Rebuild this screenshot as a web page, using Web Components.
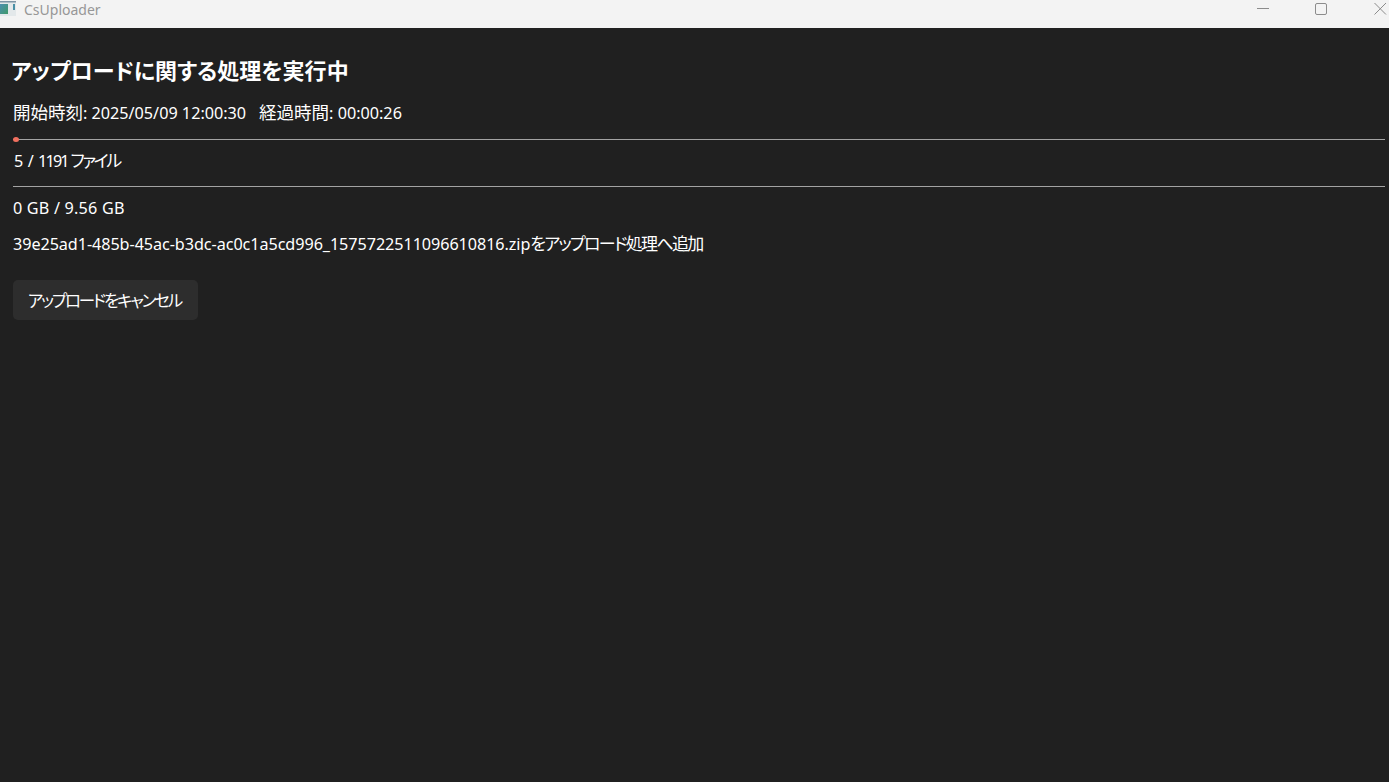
<!DOCTYPE html>
<html lang="ja">
<head>
<meta charset="utf-8">
<title>CsUploader</title>
<style>
  html, body { margin: 0; height: 100%; background: #202020; overflow: hidden; }
  body { font-family: "Noto Sans", "Noto Sans CJK JP", sans-serif; color: #fff; }
</style>
</head>
<body>
<app-window>
  <title-bar slot="bar">CsUploader</title-bar>
  <upload-status></upload-status>
</app-window>

<script>
const appWindowTemplate = document.createElement('template');
appWindowTemplate.innerHTML = `
  <style>
    :host { display: flex; flex-direction: column; height: 782px; width: 1389px; background: #202020; }
    .body { flex: 1; }
  </style>
  <slot name="bar"></slot>
  <div class="body"><slot></slot></div>
`;
class AppWindow extends HTMLElement {
  constructor() {
    super();
    this.attachShadow({ mode: 'open' });
    this.shadowRoot.appendChild(appWindowTemplate.content.cloneNode(true));
  }
}
customElements.define('app-window', AppWindow);

const titleBarTemplate = document.createElement('template');
titleBarTemplate.innerHTML = `
  <style>
    :host { display: flex; align-items: flex-start; height: 28px; background: #f3f3f3; color: #979797; font-size: 14px; }
    .icon { width: 16px; height: 18px; flex: none; margin-right: 8px; display: block; }
    .name { line-height: 19px; }
    .buttons { display: block; margin-left: auto; }
  </style>
  <svg class="icon" viewBox="0 0 16 18">
    <defs>
      <linearGradient id="g" x1="0" y1="0" x2="1" y2="1">
        <stop offset="0" stop-color="#4d8fb0"/><stop offset="1" stop-color="#3f9a6a"/>
      </linearGradient>
    </defs>
    <rect x="0" y="1" width="16" height="15" fill="#e3e8ea"/>
    <rect x="0" y="1" width="16" height="1.5" fill="#7f95a6"/>
    <rect x="0" y="4" width="8" height="10" fill="url(#g)"/>
    <rect x="13" y="4" width="2" height="6" fill="#4a8fa6"/>
  </svg>
  <span class="name"><slot></slot></span>
  <svg class="buttons" width="149" height="28" viewBox="0 0 149 28" fill="none" stroke="#8c8c8c" stroke-width="1">
    <path d="M17 8.5H29"/>
    <rect x="75.5" y="3.5" width="11" height="11" rx="1.5"/>
    <path d="M134.5 3L146 14.5M146 3L134.5 14.5"/>
  </svg>
`;
class TitleBar extends HTMLElement {
  constructor() {
    super();
    this.attachShadow({ mode: 'open' });
    this.shadowRoot.appendChild(titleBarTemplate.content.cloneNode(true));
  }
}
customElements.define('title-bar', TitleBar);

const progressLineTemplate = document.createElement('template');
progressLineTemplate.innerHTML = `
  <style>
    :host { display: block; height: 1px; background: #a3a3a3; position: relative; }
    .fill { position: absolute; left: 0; top: -2px; height: 5px; border-radius: 50%; background: #f1705f; }
  </style>
  <div class="fill"></div>
`;
class ProgressLine extends HTMLElement {
  constructor() {
    super();
    this.attachShadow({ mode: 'open' });
    this.shadowRoot.appendChild(progressLineTemplate.content.cloneNode(true));
  }
  connectedCallback() {
    const fill = this.shadowRoot.querySelector('.fill');
    fill.style.width = (this.getAttribute('fill') || 0) + 'px';
    if (!this.getAttribute('fill')) fill.remove();
  }
}
customElements.define('progress-line', ProgressLine);

const cancelButtonTemplate = document.createElement('template');
cancelButtonTemplate.innerHTML = `
  <style>
    :host { display: inline-flex; align-items: center; justify-content: center; box-sizing: border-box; width: 185px; height: 40px; padding-right: 2px; background: #2d2d2d; border-radius: 5px; font-size: 16.5px; letter-spacing: -2.15px; color: #fff; font-feature-settings: "palt"; cursor: pointer; }
  </style>
  <slot></slot>
`;
class CancelButton extends HTMLElement {
  constructor() {
    super();
    this.attachShadow({ mode: 'open' });
    this.shadowRoot.appendChild(cancelButtonTemplate.content.cloneNode(true));
  }
}
customElements.define('cancel-button', CancelButton);

const uploadStatusTemplate = document.createElement('template');
uploadStatusTemplate.innerHTML = `
  <style>
    :host { display: block; padding: 0 4px 0 13px; font-size: 16.2px; color: #fff; font-feature-settings: "palt"; }
    h1 { margin: 0; padding-top: 26px; margin-left: -2px; height: 33px; line-height: 33px; font-size: 22px; font-weight: 700; letter-spacing: 0.05px; }
    .line { height: 24px; line-height: 24px; white-space: nowrap; }
    .times { margin-top: 13px; display: flex; gap: 13px; }
    .count { margin-top: 9px; letter-spacing: -1.85px; word-spacing: 3.9px; padding-left: 1px; }
    .size { margin-top: 9px; letter-spacing: 0.2px; }
    .file { margin-top: 12px; letter-spacing: -0.07px; }
    progress-line { margin-top: 13px; }
    progress-line.first { margin-top: 15px; }
    cancel-button { margin-top: 24px; }
    .k { font-size: 17.5px; }
    .j { font-size: 17px; letter-spacing: -1.7px; }
    .count .j { letter-spacing: -2.4px; margin-left: -3.5px; }
  </style>
  <h1>アップロードに関する処理を実行中</h1>
  <div class="line times"><span><span class="k">開始時刻</span>: 2025/05/09 12:00:30</span><span><span class="k">経過時間</span>: 00:00:26</span></div>
  <progress-line class="first" fill="6"></progress-line>
  <div class="line count">5 / 1191 <span class="j">ファイル</span></div>
  <progress-line></progress-line>
  <div class="line size">0 GB / 9.56 GB</div>
  <div class="line file">39e25ad1-485b-45ac-b3dc-ac0c1a5cd996_1575722511096610816.zip<span class="j">をアップロード処理へ追加</span></div>
  <cancel-button>アップロードをキャンセル</cancel-button>
`;
class UploadStatus extends HTMLElement {
  constructor() {
    super();
    this.attachShadow({ mode: 'open' });
    this.shadowRoot.appendChild(uploadStatusTemplate.content.cloneNode(true));
  }
}
customElements.define('upload-status', UploadStatus);
</script>
</body>
</html>
